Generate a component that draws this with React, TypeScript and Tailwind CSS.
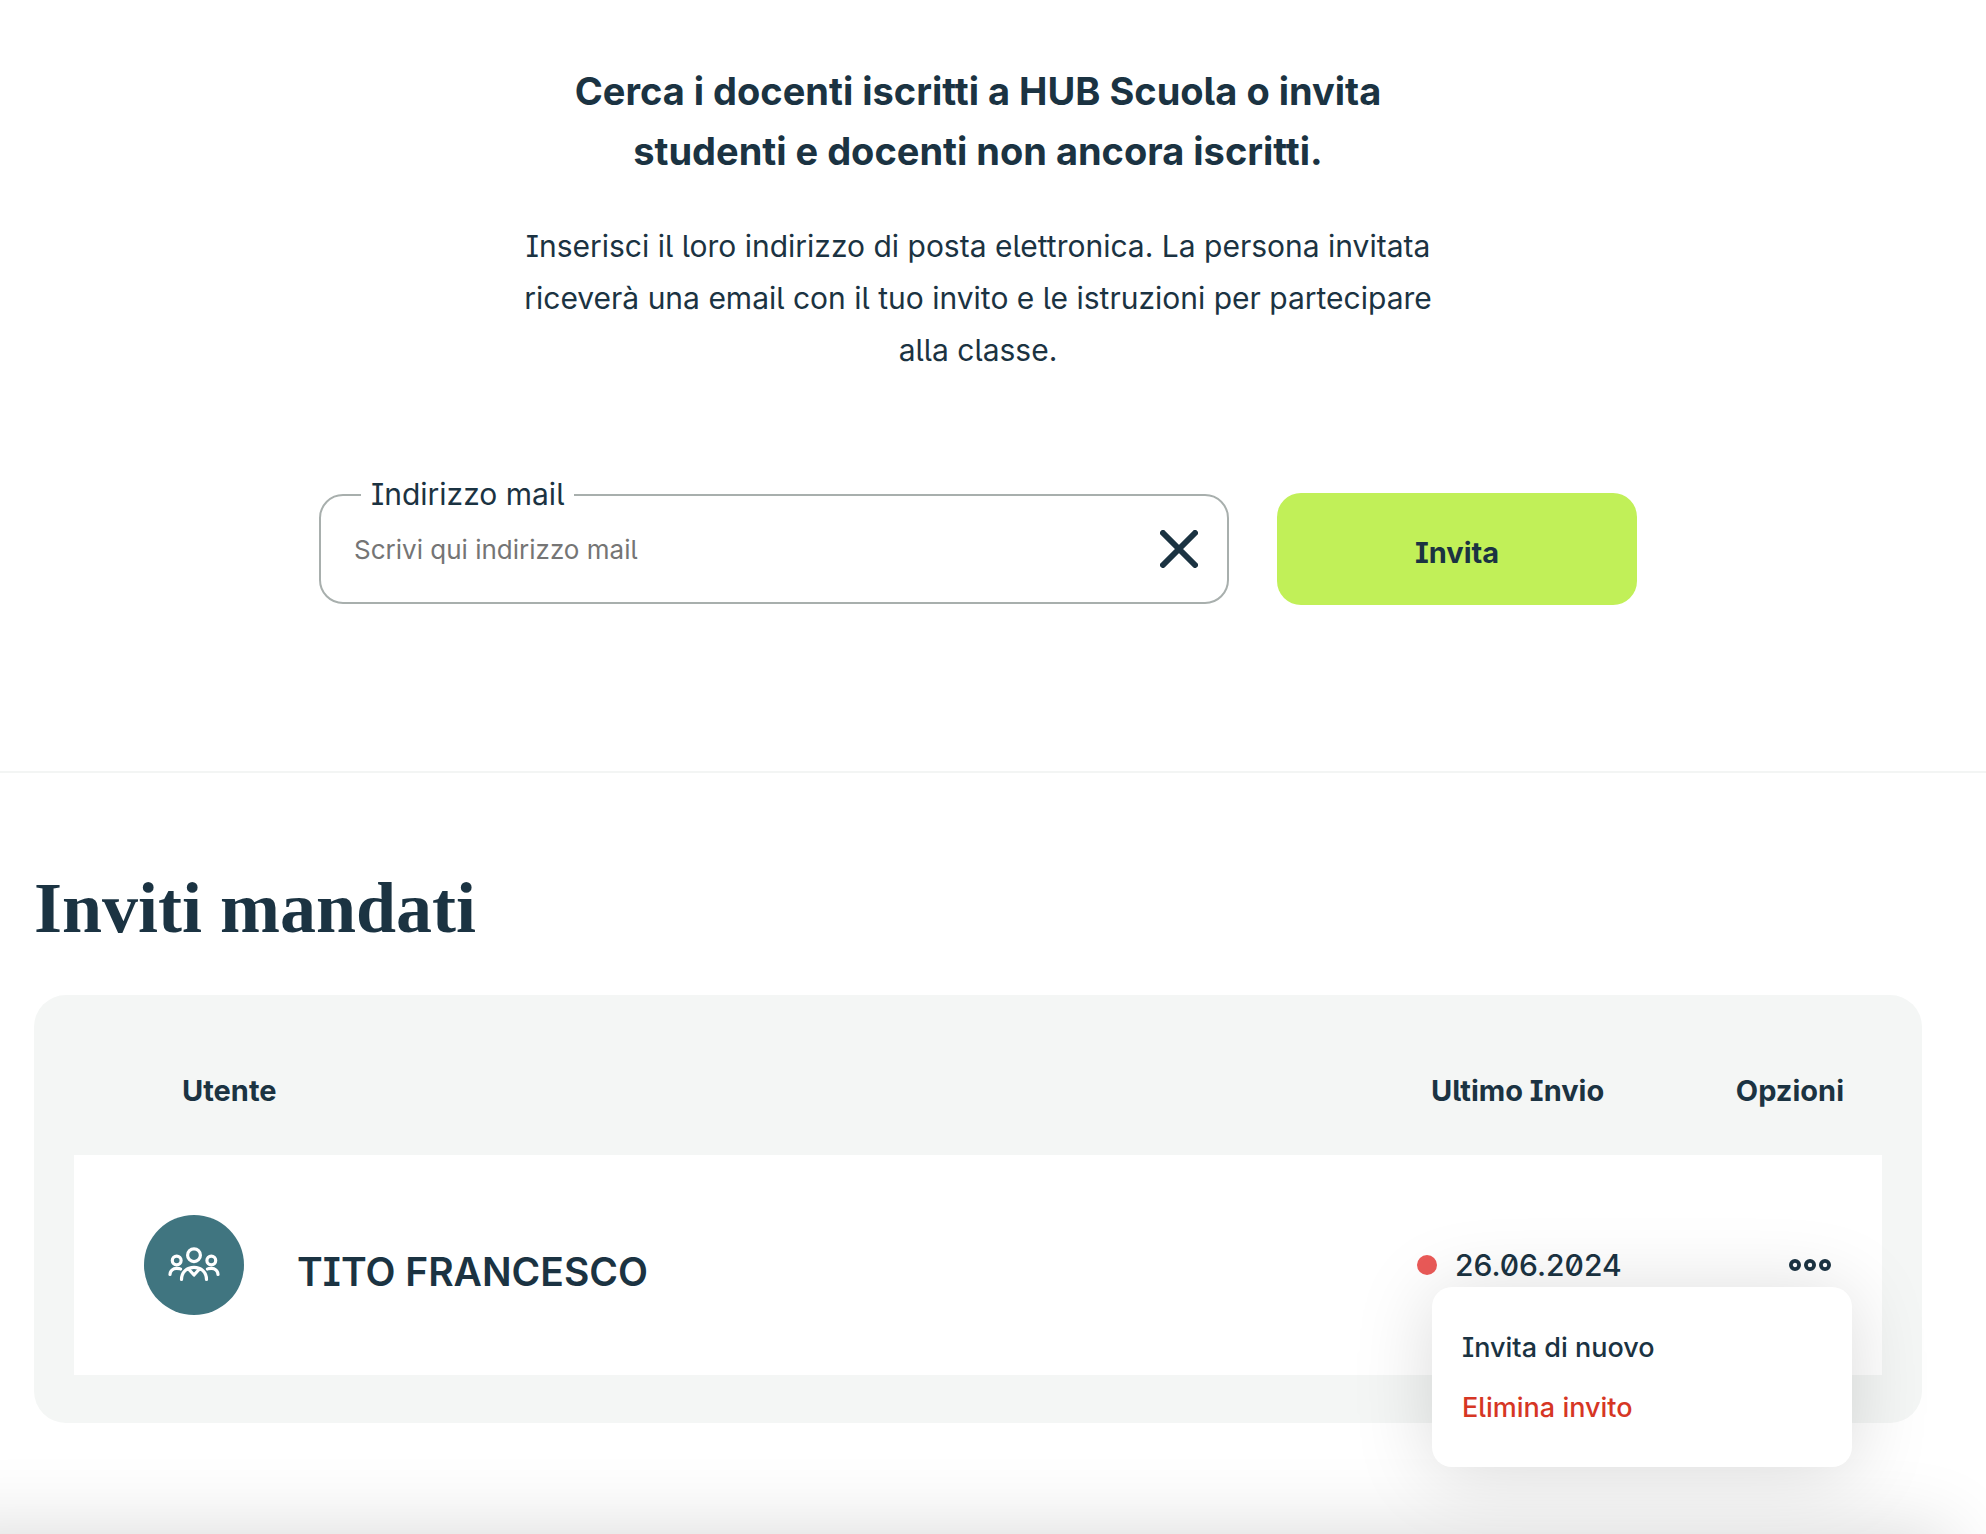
import { useState } from "react";

type Invite = { name: string; lastSent: string };

const invites: Invite[] = [{ name: "TITO FRANCESCO", lastSent: "26.06.2024" }];

function CloseIcon() {
  return (
    <svg viewBox="0 0 38 38" className="size-[38px]" fill="none" stroke="currentColor" strokeWidth="6" strokeLinecap="round" aria-hidden="true">
      <path d="M3 3 35 35M35 3 3 35" />
    </svg>
  );
}

function PeopleIcon() {
  return (
    <svg viewBox="0 0 56 40" className="h-10 w-14" fill="none" stroke="currentColor" strokeWidth="3.2" strokeLinecap="round" strokeLinejoin="round" aria-hidden="true">
      <circle cx="28" cy="10.2" r="6.4" />
      <circle cx="10.7" cy="15.5" r="4.4" />
      <circle cx="45.3" cy="15.5" r="4.4" />
      <path d="M15.5 34.5C15.5 27 21 22.3 28 22.3S40.5 27 40.5 34.5" />
      <path d="M22.5 24 28 30 33.5 24" />
      <path d="M4 29.5C4 26 7 23.3 10.5 23.3 12 23.3 13.5 23.3 14.5 24" />
      <path d="M52 29.5C52 26 49 23.3 45.5 23.3 44 23.3 42.5 23.3 41.5 24" />
    </svg>
  );
}

function DotsIcon() {
  return (
    <svg viewBox="0 0 42 12" className="h-3 w-[42px]" fill="none" stroke="currentColor" strokeWidth="3.8" aria-hidden="true">
      <circle cx="6" cy="6" r="4.1" />
      <circle cx="21" cy="6" r="4.1" />
      <circle cx="36" cy="6" r="4.1" />
    </svg>
  );
}

function InviteForm() {
  const [mail, setMail] = useState("");
  return (
    <form className="mx-auto mt-[117px] flex w-full max-w-[1318px] items-center gap-12" onSubmit={(e) => e.preventDefault()}>
      <div className="relative flex h-[110px] flex-1 items-center rounded-3xl border-2 border-[#a8afad] pr-[29px] pl-[33px]">
        <label htmlFor="mail" className="absolute -top-5 left-10 bg-white px-2.5 text-[30px] leading-9">
          Indirizzo mail
        </label>
        <input
          id="mail"
          type="email"
          value={mail}
          onChange={(e) => setMail(e.target.value)}
          placeholder="Scrivi qui indirizzo mail"
          className="min-w-0 flex-1 bg-transparent pt-0.5 text-[26px] leading-10 outline-none placeholder:text-[#757575]"
        />
        <button type="button" aria-label="Cancella" onClick={() => setMail("")}>
          <CloseIcon />
        </button>
      </div>
      <button type="submit" className="h-28 w-[360px] rounded-3xl bg-[#c1f058] pt-2 text-[29px] font-bold">
        Invita
      </button>
    </form>
  );
}

function OptionsMenu() {
  return (
    <div role="menu" className="absolute top-[132px] right-[30px] z-10 flex w-[420px] flex-col rounded-[20px] bg-white px-[30px] pt-[31px] pb-[29px] text-[27px] leading-[60px] font-medium shadow-[0_6px_80px_rgba(0,0,0,0.15)]">
      <button role="menuitem" type="button" className="text-left">
        Invita di nuovo
      </button>
      <button role="menuitem" type="button" className="text-left text-[#d63624]">
        Elimina invito
      </button>
    </div>
  );
}

function InviteRow({ invite }: { invite: Invite }) {
  const [open, setOpen] = useState(true);
  return (
    <tr className="h-[220px] bg-white">
      <td className="pl-[70px]">
        <div className="flex items-center gap-[53px]">
          <span className="flex size-[100px] items-center justify-center rounded-full bg-[#407580] text-white">
            <PeopleIcon />
          </span>
          <span className="pt-3.5 text-[39px] leading-[48px] font-semibold">{invite.name}</span>
        </div>
      </td>
      <td>
        <div className="flex items-center gap-[18px] text-[30px] leading-10 font-medium slashed-zero">
          <span className="size-5 rounded-full bg-[#ea5a58]" />
          {invite.lastSent}
        </div>
      </td>
      <td className="relative pr-[39px]">
        <button type="button" aria-label="Opzioni" aria-expanded={open} onClick={() => setOpen(!open)} className="ml-auto flex h-10 w-[66px] items-center justify-center">
          <DotsIcon />
        </button>
        {open && <OptionsMenu />}
      </td>
    </tr>
  );
}

export default function App() {
  return (
    <div className="flex min-h-screen flex-col overflow-hidden bg-white font-['Inter',sans-serif] text-[#1b3342] [font-feature-settings:'cv05','cv08','calt'_0,'liga'_0]">
      <main className="flex-1">
        <section className="border-b-2 border-[#f3f5f4] pt-[61px] pr-16 pb-[166px] pl-[34px]">
          <h1 className="mx-auto max-w-[930px] text-center text-[38px] leading-[60px] font-bold">
            Cerca i docenti iscritti a HUB Scuola o invita studenti e docenti non ancora iscritti.
          </h1>
          <p className="mx-auto mt-[39px] max-w-[940px] text-center text-[30px] leading-[52px]">
            Inserisci il loro indirizzo di posta elettronica. La persona invitata riceverà una email con il tuo invito e le istruzioni per partecipare alla classe.
          </p>
          <InviteForm />
        </section>

        <section className="pt-[95px] pr-16 pl-[34px]">
          <h2 className="font-['Liberation_Serif',serif] text-[72px] leading-20 font-bold">Inviti mandati</h2>
          <div className="mt-[47px] rounded-4xl bg-[#f4f6f5] px-10 pb-12">
            <table className="w-full table-fixed border-collapse">
              <colgroup>
                <col />
                <col className="w-[283px]" />
                <col className="w-[182px]" />
              </colgroup>
              <thead>
                <tr className="text-[29px] leading-8">
                  <th scope="col" className="pt-20 pb-12 pl-[108px] text-left font-bold">Utente</th>
                  <th scope="col" className="pt-20 pb-12 pl-3.5 text-left font-bold">Ultimo Invio</th>
                  <th scope="col" className="pt-20 pr-[38px] pb-12 text-right font-bold">Opzioni</th>
                </tr>
              </thead>
              <tbody>
                {invites.map((invite) => (
                  <InviteRow key={invite.name} invite={invite} />
                ))}
              </tbody>
            </table>
          </div>
        </section>
      </main>
      <footer className="mr-9 -mb-40 -ml-20 h-40 shadow-[0_0_80px_rgba(0,0,0,0.16)]" />
    </div>
  );
}
